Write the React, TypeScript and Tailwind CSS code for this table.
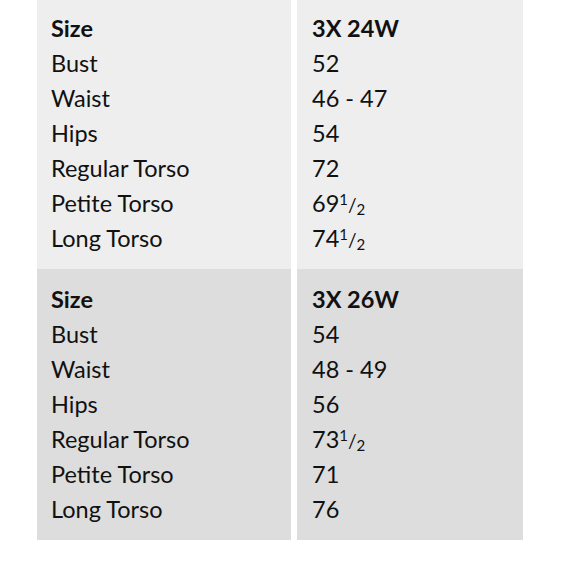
const blocks = [
  {
    size: '3X 24W',
    bg: 'bg-[#eeeeee]',
    rows: [
      ['Bust', '52'],
      ['Waist', '46 - 47'],
      ['Hips', '54'],
      ['Regular Torso', '72'],
      ['Petite Torso', '69½'],
      ['Long Torso', '74½'],
    ],
  },
  {
    size: '3X 26W',
    bg: 'bg-[#dddddd]',
    rows: [
      ['Bust', '54'],
      ['Waist', '48 - 49'],
      ['Hips', '56'],
      ['Regular Torso', '73½'],
      ['Petite Torso', '71'],
      ['Long Torso', '76'],
    ],
  },
]

function Value({ text }: { text: string }) {
  if (!text.endsWith('½')) return <>{text}</>
  return (
    <>
      {text.slice(0, -1)}
      <span className="relative -top-[7px] text-[15px] leading-none">1</span>
      <span className="text-[19px] leading-none">/</span>
      <span className="relative top-[3px] text-[15px] leading-none">2</span>
    </>
  )
}

export default function App() {
  return (
    <div className="w-[580px] h-[580px] overflow-hidden bg-white font-['Lato',sans-serif] text-[23.5px] leading-[35px] text-[#111111]">
      <div className="-mt-[2px] ml-[37px] w-[486px]">
        {blocks.map((b) => (
          <div key={b.size} className="grid grid-cols-[254px_226px] gap-x-[6px]">
            <div className={`${b.bg} py-[13px] pl-[14px]`}>
              <div className="font-bold">Size</div>
              {b.rows.map(([k]) => (
                <div key={k}>{k}</div>
              ))}
            </div>
            <div className={`${b.bg} py-[13px] pl-[15px]`}>
              <div className="font-bold">{b.size}</div>
              {b.rows.map(([k, v]) => (
                <div key={k} className="h-[35px]">
                  <Value text={v} />
                </div>
              ))}
            </div>
          </div>
        ))}
      </div>
    </div>
  )
}
